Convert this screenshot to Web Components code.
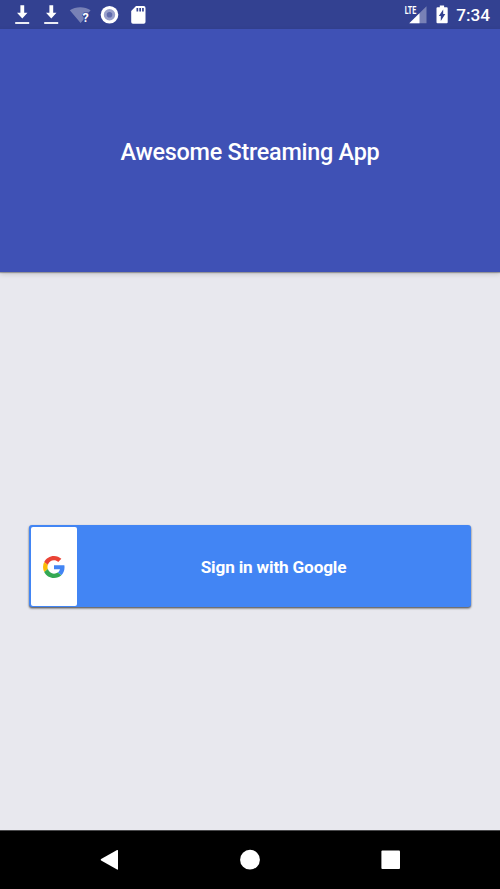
<!DOCTYPE html>
<html lang="en">
<head>
<meta charset="utf-8">
<title>Awesome Streaming App</title>
<style>
  html, body {
    margin: 0;
    height: 100%;
    overflow: hidden;
    font-family: Roboto, "Liberation Sans", sans-serif;
  }
</style>
</head>
<body>
<login-screen>
  <status-bar slot="status" time="7:34"></status-bar>
  <app-header slot="header">Awesome Streaming App</app-header>
  <google-button>Sign in with Google</google-button>
  <navigation-bar slot="navigation"></navigation-bar>
</login-screen>

<script>
/**
 * Creates a template from a string of markup.
 *
 * @param {string} html the markup.
 * @returns {HTMLTemplateElement} The template.
 */
function createTemplate(html) {
  const template = document.createElement('template');
  template.innerHTML = html;
  return template;
}

/**
 * Base class that clones a template into an open shadow root.
 */
class TemplateElement extends HTMLElement {
  constructor() {
    super();
    this.attachShadow({ mode: 'open' })
      .appendChild(this.constructor.template.content.cloneNode(true));
  }
}

customElements.define('status-icon',
  /**
   * Represents a single icon of the status bar.
   */
  class extends HTMLElement {
    /**
     * Drawings by icon name, all of them 20 x 22.
     */
    static icons = {
      download: `
        <path d="M8.4 1.2h3.8v7.6h3.3L10.3 14.6 5 8.8h3.4z" fill="#fff"/>
        <path d="M3.2 18h14v2h-14z" fill="#fff" opacity=".9"/>`,
      wifi: `
        <path d="M-.2 6.3C5.6 2.3 14.8 2.3 20.6 6.3L18.7 8.5h-5l-1.8 3 1.7 1.6v2.4L10.6 19z" fill="#fff" opacity=".34"/>
        <text x="12.4" y="17.9" font-size="12.5" font-weight="700" fill="#fff">?</text>`,
      record: `
        <circle cx="10.5" cy="10.8" r="8.8" fill="#fff"/>
        <circle cx="10.5" cy="10.8" r="5.7" fill="#99a0cb"/>
        <circle cx="10.5" cy="10.8" r="2.8" fill="#606bac"/>`,
      card: `
        <path d="M8 2.1h7.7a1.8 1.8 0 0 1 1.8 1.8v14a1.8 1.8 0 0 1-1.8 1.8H5a1.8 1.8 0 0 1-1.8-1.8V7.1z" fill="#fff"/>
        <path d="M8.5 4h1.7v3.5H8.5zM11.3 4H13v3.5h-1.7zM14.1 4h1.7v3.5h-1.7z" fill="#334191"/>`,
      signal: `
        <path d="M19.5 2.3v17H2.3z" fill="#fff" opacity=".34"/>
        <path d="M12.5 9.3v10H2.3z" fill="#fff"/>
        <text x="-2.2" y="9.8" font-size="10.4" font-weight="700" textLength="11.5" lengthAdjust="spacingAndGlyphs" fill="#fff">LTE</text>`,
      battery: `
        <path d="M7.8 1.4h4.3v1.9h2.6q1 0 1 1v14q0 1-1 1H5.5q-1 0-1-1v-14q0-1 1-1h2.3z" fill="#fff"/>
        <path d="M11.2 5.4v4.5h2.1l-4.5 7.1v-4.9H6.8z" fill="#334191"/>`
    };

    connectedCallback() {
      if (this.shadowRoot) return;
      this.attachShadow({ mode: 'open' }).innerHTML = `
        <style>
          :host { display: block; width: 20px; height: 22px; }
          svg { display: block; overflow: visible; }
        </style>
        <svg width="20" height="22" viewBox="0 0 20 22">
          ${this.constructor.icons[this.getAttribute('name')]}
        </svg>`;
    }
  }
);

customElements.define('status-bar',
  /**
   * Represents the system status bar.
   */
  class extends TemplateElement {
    static template = createTemplate(`
      <style>
        :host {
          display: flex;
          align-items: center;
          justify-content: space-between;
          box-sizing: border-box;
          height: 29px;
          padding: 0 10px 0 12px;
          background: #334191;
          color: #fff;
        }
        .group { display: flex; align-items: center; }
        .notifications { gap: 9px; }
        .system { gap: 11px; }
        #time {
          margin-left: -7px;
          padding-top: 1px;
          font-size: 17.2px;
          line-height: 20px;
          font-weight: 500;
        }
        .battery { margin-left: -6px; }
      </style>
      <div class="group notifications">
        <status-icon name="download"></status-icon>
        <status-icon name="download"></status-icon>
        <status-icon name="wifi"></status-icon>
        <status-icon name="record"></status-icon>
        <status-icon name="card"></status-icon>
      </div>
      <div class="group system">
        <status-icon name="signal"></status-icon>
        <status-icon class="battery" name="battery"></status-icon>
        <span id="time"></span>
      </div>`);

    connectedCallback() {
      this.shadowRoot.querySelector('#time').textContent = this.getAttribute('time');
    }
  }
);

customElements.define('app-header',
  /**
   * Represents the large header with the name of the app.
   */
  class extends TemplateElement {
    static template = createTemplate(`
      <style>
        :host {
          display: flex;
          align-items: center;
          justify-content: center;
          box-sizing: border-box;
          height: 243px;
          padding-top: 2px;
          background: #3f51b5;
          box-shadow: 0 1px 1px rgba(0, 0, 0, .28), 0 2px 5px rgba(0, 0, 0, .16);
          color: #fff;
          font-size: 23.4px;
          font-weight: 500;
          line-height: 28px;
          letter-spacing: -.25px;
          white-space: nowrap;
        }
      </style>
      <slot></slot>`);
  }
);

customElements.define('google-button',
  /**
   * Represents the sign in button.
   */
  class extends TemplateElement {
    static template = createTemplate(`
      <style>
        :host { display: block; }
        button {
          display: flex;
          box-sizing: border-box;
          width: 100%;
          height: 82px;
          padding: 2px;
          border: 0;
          border-radius: 3px;
          background: #4285f4;
          box-shadow: 0 1px 2px rgba(0, 0, 0, .55), 0 2px 2px rgba(0, 0, 0, .2);
          color: #fff;
          font: 700 17.2px/20px Roboto, "Liberation Sans", sans-serif;
          letter-spacing: -.18px;
        }
        .logo {
          display: flex;
          align-items: center;
          justify-content: center;
          width: 46px;
          height: 79px;
          border-radius: 2px;
          background: #fff;
        }
        .label {
          flex: 1;
          align-self: center;
          padding: 2px 0 0 1px;
          text-align: center;
        }
      </style>
      <button type="button">
        <span class="logo">
          <svg width="22" height="22" viewBox="0 0 48 48">
            <path fill="#ea4335" d="M24 9.5c3.54 0 6.71 1.22 9.21 3.6l6.85-6.85C35.9 2.38 30.47 0 24 0 14.62 0 6.51 5.38 2.56 13.22l7.98 6.19C12.43 13.72 17.74 9.5 24 9.5z"/>
            <path fill="#4285f4" d="M46.98 24.55c0-1.57-.15-3.09-.38-4.55H24v9.02h12.94c-.58 2.96-2.26 5.48-4.78 7.18l7.73 6c4.51-4.18 7.09-10.36 7.09-17.65z"/>
            <path fill="#fbbc05" d="M10.53 28.59A14.5 14.5 0 0 1 9.77 24c0-1.6.27-3.14.76-4.59l-7.98-6.19A23.99 23.99 0 0 0 0 24c0 3.88.92 7.54 2.56 10.78z"/>
            <path fill="#34a853" d="M24 48c6.48 0 11.93-2.13 15.89-5.81l-7.73-6c-2.15 1.45-4.92 2.3-8.16 2.3-6.26 0-11.57-4.22-13.47-9.91l-7.98 6.19C6.51 42.62 14.62 48 24 48z"/>
          </svg>
        </span>
        <span class="label"><slot></slot></span>
      </button>`);
  }
);

customElements.define('navigation-bar',
  /**
   * Represents the system navigation bar.
   */
  class extends TemplateElement {
    static template = createTemplate(`
      <style>
        :host {
          display: flex;
          align-items: center;
          justify-content: center;
          box-sizing: border-box;
          gap: 117px;
          height: 59px;
          border-top: 1px solid #4a4a4c;
          background: #000;
        }
        svg { display: block; fill: #fff; }
      </style>
      <svg width="24" height="24"><path d="M21 2.6v18.4q0 1-.9.5L4.1 12.5q-1-.7 0-1.4L20.1 2.1q.9-.5.9.5z"/></svg>
      <svg width="24" height="24"><circle cx="12" cy="11.7" r="9.9"/></svg>
      <svg width="24" height="24"><rect x="2.4" y="2.5" width="18.6" height="18.6" rx="1"/></svg>`);
  }
);

customElements.define('login-screen',
  /**
   * Represents the screen, from the status bar to the navigation bar.
   */
  class extends TemplateElement {
    static template = createTemplate(`
      <style>
        :host {
          display: flex;
          flex-direction: column;
          height: 100%;
          background: #e8e8ee;
        }
        main {
          flex: 1;
          display: flex;
          flex-direction: column;
          justify-content: center;
          padding: 30px 29px 0;
        }
      </style>
      <slot name="status"></slot>
      <slot name="header"></slot>
      <main><slot></slot></main>
      <slot name="navigation"></slot>`);
  }
);
</script>
</body>
</html>
